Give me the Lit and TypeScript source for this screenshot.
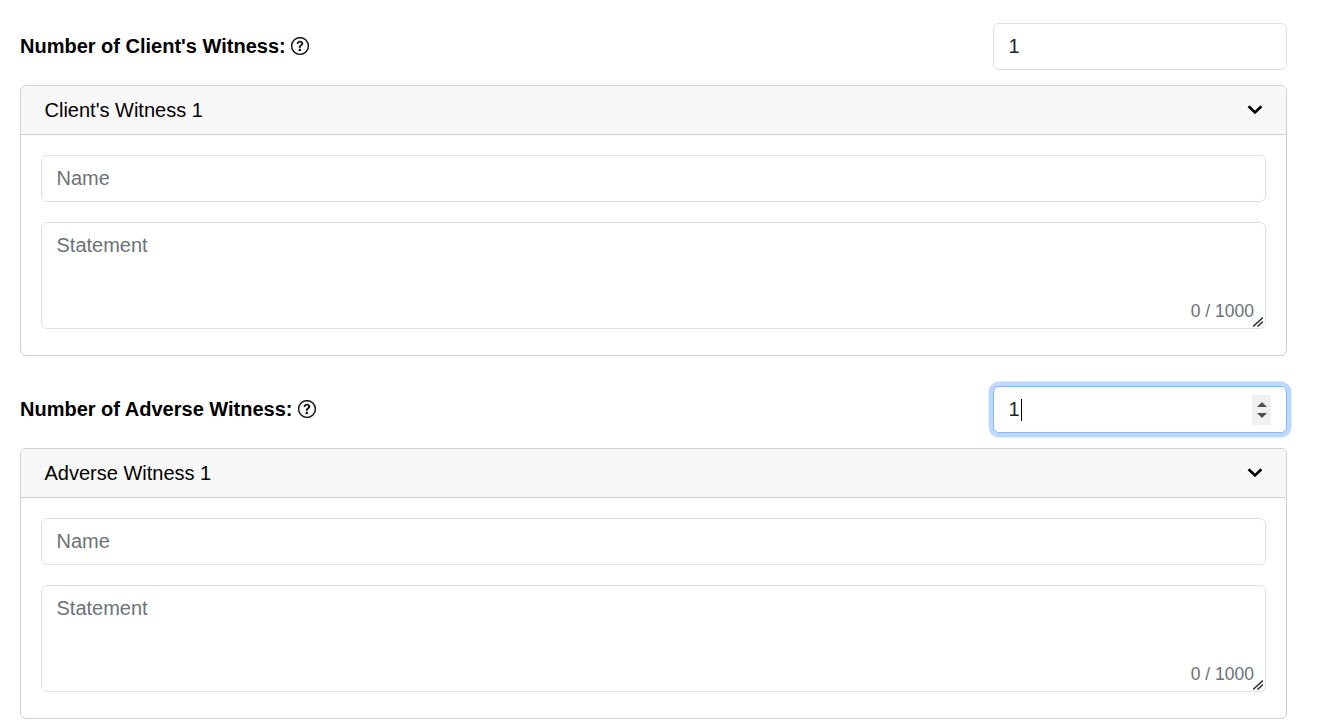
import { LitElement, html, css } from "lit";
import { customElement } from "lit/decorators.js";

const help = html`<svg class="help" viewBox="0 0 16 16" width="18" height="18" fill="currentColor" stroke="currentColor" stroke-width=".3" aria-hidden="true">
  <path d="M8 15A7 7 0 1 1 8 1a7 7 0 0 1 0 14zm0 1A8 8 0 1 0 8 0a8 8 0 0 0 0 16z"/>
  <path d="M5.255 5.786a.237.237 0 0 0 .241.247h.825c.138 0 .248-.113.266-.25.09-.656.54-1.134 1.342-1.134.686 0 1.314.343 1.314 1.168 0 .635-.374.927-.965 1.371-.673.489-1.206 1.06-1.168 1.987l.003.217a.25.25 0 0 0 .25.246h.811a.25.25 0 0 0 .25-.25v-.105c0-.718.273-.927 1.01-1.486.609-.463 1.244-.977 1.244-2.056 0-1.511-1.276-2.241-2.673-2.241-1.267 0-2.655.59-2.75 2.286zm1.557 5.763c0 .533.425.927 1.01.927.609 0 1.028-.394 1.028-.927 0-.552-.42-.94-1.029-.94-.584 0-1.009.388-1.009.94z"/>
</svg>`;

const chevron = html`<svg class="chev" viewBox="0 0 16 16" width="16" height="16" fill="none" stroke="#000" stroke-width="2.6" aria-hidden="true">
  <path d="M1.6 4.2 L8 10.4 L14.4 4.2"/>
</svg>`;

const grip = html`<svg class="grip" viewBox="0 0 10 10" width="10" height="10" fill="none" stroke="#333" stroke-width="1.6" aria-hidden="true">
  <path d="M0 9.5 L10 .5 M4.5 9.5 L10 4.5"/>
</svg>`;

@customElement("app-root")
export class AppRoot extends LitElement {
  static styles = css`
    :host {
      display: block;
      height: 727px;
      overflow: hidden;
      background: #fff;
      color: #000;
      font-family: "Liberation Sans", Arial, sans-serif;
      font-size: 20px;
    }
    .page {
      display: flex;
      flex-direction: column;
      gap: 30px;
      padding: 23px 39px 0 20px;
    }
    .section {
      display: flex;
      flex-direction: column;
      gap: 15px;
    }
    .row {
      display: flex;
      align-items: center;
      justify-content: space-between;
    }
    .label {
      display: flex;
      align-items: center;
      gap: 5.5px;
      margin-bottom: 2px;
      font-weight: 700;
      font-size: 20px;
      line-height: 24px;
    }
    .help {
      display: block;
      color: #000;
    }
    .field {
      box-sizing: border-box;
      display: block;
      width: 100%;
      height: 47px;
      padding: 0 15px 0 14.5px;
      border: 1px solid #dfe1e3;
      border-radius: 6px;
      background: #fff;
      color: #212529;
      font: inherit;
      font-size: 20px;
      outline: none;
    }
    .field::placeholder {
      color: #6c7277;
      opacity: 1;
    }
    .number {
      flex: none;
      width: 294px;
    }
    .focused {
      display: flex;
      align-items: center;
      border-color: #86b7fe;
      box-shadow: 0 0 0 4.5px #bdd9fd;
      color: #212529;
    }
    .caret {
      width: 1px;
      height: 22px;
      margin-left: 1px;
      background: #000;
    }
    .spin {
      display: flex;
      flex-direction: column;
      align-items: center;
      justify-content: center;
      gap: 6px;
      width: 19px;
      height: 30px;
      margin-left: auto;
      background: #f0f0f0;
    }
    .spin i {
      width: 0;
      height: 0;
      border-left: 5px solid transparent;
      border-right: 5px solid transparent;
    }
    .spin .up {
      border-bottom: 5px solid #505050;
    }
    .spin .down {
      border-top: 5px solid #505050;
    }
    .card {
      border: 1px solid #cdcfd1;
      border-radius: 6px;
      overflow: hidden;
    }
    .head {
      display: flex;
      align-items: center;
      justify-content: space-between;
      height: 48px;
      padding: 0 23px 0 23.5px;
      background: #f8f8f8;
      border-bottom: 1px solid #cdcfd1;
      font-size: 20px;
    }
    .chev {
      display: block;
    }
    .body {
      display: flex;
      flex-direction: column;
      gap: 20px;
      padding: 20px 20px 26px;
    }
    .area-wrap {
      position: relative;
    }
    .area {
      height: 107px;
      padding-top: 9px;
      padding-bottom: 10px;
      resize: vertical;
      line-height: 26px;
    }
    .area::-webkit-resizer {
      display: none;
    }
    .count {
      position: absolute;
      right: 12px;
      bottom: 6px;
      font-size: 17.5px;
      line-height: 24px;
      color: #6c7277;
    }
    .grip {
      position: absolute;
      right: 3px;
      bottom: 2px;
      pointer-events: none;
    }
  `;

  private block(label: string, item: string, focused: boolean) {
    return html`<section class="section">
      <div class="row">
        <label class="label">${label} ${help}</label>
        ${focused
          ? html`<div class="field number focused">
              <span>1</span><span class="caret"></span>
              <span class="spin"><i class="up"></i><i class="down"></i></span>
            </div>`
          : html`<input class="field number" type="text" .value=${"1"} />`}
      </div>
      <div class="card">
        <div class="head"><span>${item}</span>${chevron}</div>
        <div class="body">
          <input class="field" type="text" placeholder="Name" />
          <div class="area-wrap">
            <textarea class="field area" placeholder="Statement"></textarea>
            <span class="count">0 / 1000</span>
            ${grip}
          </div>
        </div>
      </div>
    </section>`;
  }

  render() {
    return html`<main class="page">
      ${this.block("Number of Client's Witness:", "Client's Witness 1", false)}
      ${this.block("Number of Adverse Witness:", "Adverse Witness 1", true)}
    </main>`;
  }
}
